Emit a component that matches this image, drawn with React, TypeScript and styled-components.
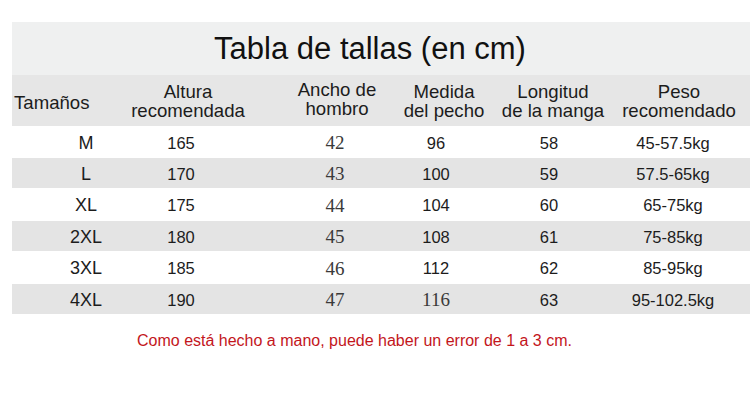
import styled, { createGlobalStyle } from "styled-components";

const GlobalStyle = createGlobalStyle`
	body {
		margin: 0;
		background: #fff;
		font-family: "Liberation Sans", Arial, sans-serif;
		color: #1c1c1c;
	}
`;

const theme = {
	colors: {
		titleBand: "#eff0f0",
		headerBand: "#e6e6e6",
		stripe: "#e4e4e4",
		text: "#1c1c1c",
		note: "#c3161c",
	},
};

// column widths chosen so each cell's centre sits under its heading / value in the picture
const HEADER_COLS = "76px 196px 102px 112px 106px 146px";
const BODY_COLS = "38px 152px 156px 46px 180px 68px";

const Page = styled.div`
	width: 750px;
	height: 406px;
	padding-top: 22px;
	box-sizing: border-box;
	overflow: hidden;
`;

const Table = styled.div`
	margin-left: 12px;
	display: flex;
	flex-direction: column;
`;

const TitleBand = styled.div`
	height: 53px;
	display: flex;
	align-items: center;
	justify-content: center;
	padding-right: 22px;
	background: ${theme.colors.titleBand};
	font-size: 31px;
	color: #111;
`;

const Row = styled.div<{ $cols: string; $offset?: number; $striped?: boolean; $height: number }>`
	display: grid;
	grid-template-columns: ${({ $cols }) => $cols};
	align-items: center;
	height: ${({ $height }) => $height}px;
	padding-left: ${({ $offset }) => $offset ?? 0}px;
	background: ${({ $striped }) => ($striped ? theme.colors.stripe : "#fff")};
`;

const HeaderRow = styled(Row)`
	background: ${theme.colors.headerBand};
`;

const Cell = styled.div<{ $align?: "start" | "center" }>`
	display: flex;
	justify-content: ${({ $align }) => ($align === "start" ? "flex-start" : "center")};
	white-space: nowrap;
`;

const HeadText = styled.span<{ $shift?: number }>`
	font-size: 18.6px;
	line-height: 19px;
	text-align: center;
	color: ${theme.colors.text};
	transform: translateY(${({ $shift }) => $shift ?? 0}px);
`;

type Face = "size" | "sans" | "serif";

const Value = styled.span<{ $face: Face }>`
	font-family: ${({ $face }) => ($face === "serif" ? `"Liberation Serif", "Times New Roman", serif` : `"Liberation Sans", Arial, sans-serif`)};
	font-size: ${({ $face }) => ($face === "size" ? "18px" : $face === "serif" ? "19px" : "16.5px")};
	color: ${({ $face }) => ($face === "serif" ? "#3a3a3a" : theme.colors.text)};
	padding-top: 2px;
`;

const Note = styled.p`
	margin: 18px 0 0 137px;
	font-size: 16px;
	color: ${theme.colors.note};
`;

const headers = [
	{ text: ["Tamaños"], shift: 2 },
	{ text: ["Altura", "recomendada"], shift: 0 },
	{ text: ["Ancho de", "hombro"], shift: -2 },
	{ text: ["Medida", "del pecho"], shift: 0 },
	{ text: ["Longitud", "de la manga"], shift: 0 },
	{ text: ["Peso", "recomendado"], shift: 0 },
];

const rows = [
	["M", "165", "42", "96", "58", "45-57.5kg"],
	["L", "170", "43", "100", "59", "57.5-65kg"],
	["XL", "175", "44", "104", "60", "65-75kg"],
	["2XL", "180", "45", "108", "61", "75-85kg"],
	["3XL", "185", "46", "112", "62", "85-95kg"],
	["4XL", "190", "47", "116", "63", "95-102.5kg"],
];

const faces: Face[] = ["size", "sans", "serif", "sans", "sans", "sans"];
const heights = [32, 30, 33, 30, 33, 30];

export default function App() {
	return (
		<Page>
			<GlobalStyle />
			<Table>
				<TitleBand>Tabla de tallas (en cm)</TitleBand>
				<HeaderRow $cols={HEADER_COLS} $height={51} $offset={2}>
					{headers.map((h, i) => (
						<Cell key={i} $align={i === 0 ? "start" : "center"}>
							<HeadText $shift={h.shift}>
								{h.text.map((line, j) => (
									<div key={j}>{line}</div>
								))}
							</HeadText>
						</Cell>
					))}
				</HeaderRow>
				{rows.map((row, r) => (
					<Row key={r} $cols={BODY_COLS} $offset={55} $striped={r % 2 === 1} $height={heights[r]}>
						{row.map((value, c) => (
							<Cell key={c}>
								<Value $face={r === 5 && c === 3 ? "serif" : faces[c]}>{value}</Value>
							</Cell>
						))}
					</Row>
				))}
			</Table>
			<Note>Como está hecho a mano, puede haber un error de 1 a 3 cm.</Note>
		</Page>
	);
}
